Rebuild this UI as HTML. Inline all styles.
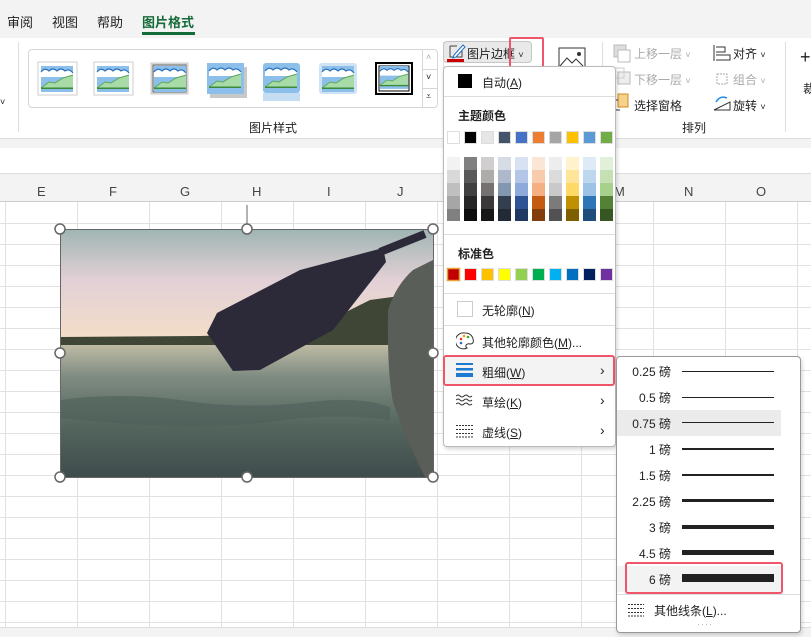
<!DOCTYPE html><html><head><meta charset="utf-8"><style>
*{box-sizing:border-box;margin:0;padding:0}
body{width:811px;height:637px;overflow:hidden;position:relative;background:#fff;font-family:"Liberation Sans","Noto Sans CJK SC",sans-serif;font-size:12px;color:#222}
.a{position:absolute}
.t{position:absolute;white-space:nowrap}
.vl{position:absolute;top:202px;width:1px;height:435px;background:#e1e1e1}
.hl{position:absolute;left:0;width:811px;height:1px;background:#e1e1e1}
.mi{position:absolute;left:482px;font-size:12px}
.sr{position:absolute;left:617px;width:164px;height:26px}
.sr span{position:absolute;right:110px;top:5px;font-size:12px}
.sr i{position:absolute;left:65px;width:92px;background:#222}
</style></head><body>
<div class="a" style="left:0;top:0;width:811px;height:38px;background:#f3f3f3"></div>
<div class="t" style="left:7px;top:12px;font-size:13px">审阅</div>
<div class="t" style="left:52px;top:12px;font-size:13px">视图</div>
<div class="t" style="left:97px;top:12px;font-size:13px">帮助</div>
<div class="t" style="left:142px;top:12px;font-size:13px;color:#166b3a;font-weight:bold">图片格式</div>
<div class="a" style="left:142px;top:32px;width:53px;height:3px;background:#166b3a"></div>
<div class="a" style="left:0;top:38px;width:811px;height:101px;background:#fff;border-bottom:1px solid #ddd;box-shadow:0 2px 3px rgba(0,0,0,.12)"></div>
<div class="a" style="left:18px;top:42px;width:1px;height:90px;background:#ddd"></div>
<div class="t" style="left:0;top:97px;font-size:9px">˅</div>
<div class="a" style="left:28px;top:49px;width:410px;height:59px;border:1px solid #d6d6d6;border-radius:4px"></div>
<div class="a" style="left:422px;top:49px;width:16px;height:59px;border-left:1px solid #d6d6d6"></div>
<div class="a" style="left:422px;top:69px;width:16px;height:20px;border-top:1px solid #d6d6d6;border-bottom:1px solid #d6d6d6"></div>
<div class="t" style="left:426px;top:52px;font-size:9px;color:#aaa">˄</div>
<div class="t" style="left:426px;top:72px;font-size:9px">˅</div>
<div class="t" style="left:426px;top:91px;font-size:9px">⩡</div>
<svg class="a" style="left:0;top:0" width="440" height="120">
<defs><g id="pic"><rect x="0" y="0" width="32" height="26" fill="#8cc0ea"/><path d="M0 6 q4-5 8-1 q4-4 8 0 q4-4 8 0 q4-3 8 2 V11 H0Z" fill="#fff"/><path d="M0 6 q4-5 8-1 q4-4 8 0 q4-4 8 0 q4-3 8 2" stroke="#2a72c0" fill="none" stroke-width="1.2"/><path d="M0 22 L8 16 L14 17 L22 12 L32 9 V22Z" fill="#a8dba8"/><path d="M0 22 L8 16 L14 17 L22 12 L32 9" stroke="#5aa85a" fill="none"/><rect x="0" y="21.5" width="32" height="1.5" fill="#3a8a3a"/></g></defs>
<rect x="38" y="62" width="39" height="33" fill="#fff" stroke="#ccc"/><use href="#pic" x="41" y="66"/>
<rect x="94" y="62" width="39" height="33" fill="#fff" stroke="#ccc"/><use href="#pic" x="97" y="66"/>
<rect x="151" y="63" width="37" height="31" fill="#ddd" stroke="#ccc"/><rect x="153" y="65" width="33" height="27" fill="none" stroke="#666"/><use href="#pic" x="154" y="66"/>
<rect x="210" y="67" width="37" height="31" fill="#c8c8c8"/><rect x="207" y="63" width="37" height="31" fill="#8cc0ea"/><use href="#pic" x="209" y="65"/>
<rect x="263" y="93" width="37" height="8" fill="#c5ddf3"/><rect x="263" y="63" width="37" height="30" rx="3" fill="#8cc0ea"/><use href="#pic" x="265" y="65"/>
<rect x="319" y="63" width="38" height="31" rx="3" fill="#cfe3f5"/><use href="#pic" x="322" y="66"/>
<rect x="376" y="63" width="36" height="31" fill="#fff" stroke="#000" stroke-width="2"/><rect x="379" y="66" width="30" height="25" fill="none" stroke="#000"/><use href="#pic" x="380" y="66" transform="translate(380 66) scale(.88) translate(-380 -66)"/>
</svg>
<div class="t" style="left:249px;top:119px;font-size:12px">图片样式</div>
<div class="a" style="left:443px;top:42px;width:1px;height:90px;background:#ddd"></div>
<div class="a" style="left:443px;top:41px;width:89px;height:22px;background:#e9e9e9;border:1px solid #c6c6c6;border-radius:4px"></div>
<svg class="a" style="left:446px;top:42px" width="20" height="20"><path d="M4 4 h7 M4 4 v11 h12 v-6" stroke="#444" fill="none"/><path d="M8 13 l9-10 2 2 -9 10 -3 1z" fill="#fff" stroke="#1b6fc4"/><rect x="1" y="17" width="17" height="3" fill="#c00"/></svg>
<div class="t" style="left:467px;top:45px">图片边框 <span style="font-size:9px">˅</span></div>
<div class="a" style="left:509px;top:37px;width:35px;height:31px;border:2px solid #f0566a;border-radius:2px"></div>
<svg class="a" style="left:558px;top:47px" width="30" height="22"><path d="M1 1 h26 v19 h-26z" fill="none" stroke="#333"/><path d="M2 19 l7-8 5 5 4-4 7 7" fill="none" stroke="#333"/><circle cx="21" cy="7" r="2" fill="#333"/><rect x="11" y="19" width="14" height="2" fill="#1e88e5"/></svg>
<div class="a" style="left:602px;top:42px;width:1px;height:70px;background:#ddd"></div>
<svg class="a" style="left:612px;top:44px" width="20" height="80"><rect x="2" y="1" width="12" height="12" fill="#ddd" stroke="#bbb"/><rect x="6" y="6" width="12" height="12" fill="#fff" stroke="#bbb"/><rect x="6" y="28" width="12" height="12" fill="#eee" stroke="#bbb"/><rect x="2" y="24" width="10" height="10" fill="none" stroke="#ccc"/><rect x="6" y="50" width="10" height="13" fill="#f6d28a" stroke="#d08a20"/><path d="M2 56 h4 M2 56 v10 h6" stroke="#333" fill="none"/></svg>
<div class="t" style="left:634px;top:45px;color:#aaa">上移一层 <span style="font-size:9px">˅</span></div>
<div class="t" style="left:634px;top:71px;color:#aaa">下移一层 <span style="font-size:9px">˅</span></div>
<div class="t" style="left:634px;top:97px">选择窗格</div>
<svg class="a" style="left:712px;top:44px" width="22" height="80"><path d="M2 1 v16 M4 3 h9 v5 h-9 M4 11 h14 v5 h-14" stroke="#333" fill="none"/><path d="M5 30 h10 v10 h-10z" stroke="#aaa" fill="none" stroke-dasharray="2 1"/><path d="M2 66 l16-8 v8z" stroke="#333" fill="none"/><path d="M4 58 q4-7 11-4" stroke="#1e88e5" fill="none" stroke-width="1.5"/></svg>
<div class="t" style="left:733px;top:45px">对齐 <span style="font-size:9px">˅</span></div>
<div class="t" style="left:733px;top:71px;color:#aaa">组合 <span style="font-size:9px">˅</span></div>
<div class="t" style="left:733px;top:97px">旋转 <span style="font-size:9px">˅</span></div>
<div class="t" style="left:682px;top:119px">排列</div>
<div class="a" style="left:785px;top:42px;width:1px;height:90px;background:#ddd"></div>
<div class="t" style="left:800px;top:47px;font-size:18px;font-weight:100">+</div>
<div class="t" style="left:803px;top:80px">裁</div>
<div class="a" style="left:0;top:139px;width:811px;height:9px;background:#f3f3f3"></div>
<div class="a" style="left:0;top:173px;width:811px;height:29px;background:#f3f3f3;border-top:1px solid #ddd;border-bottom:1px solid #ccc"></div>
<div class="t" style="left:37px;top:184px;color:#444;font-size:13px">E</div>
<div class="t" style="left:109px;top:184px;color:#444;font-size:13px">F</div>
<div class="t" style="left:180px;top:184px;color:#444;font-size:13px">G</div>
<div class="t" style="left:252px;top:184px;color:#444;font-size:13px">H</div>
<div class="t" style="left:327px;top:184px;color:#444;font-size:13px">I</div>
<div class="t" style="left:397px;top:184px;color:#444;font-size:13px">J</div>
<div class="t" style="left:614px;top:184px;color:#444;font-size:13px">M</div>
<div class="t" style="left:684px;top:184px;color:#444;font-size:13px">N</div>
<div class="t" style="left:756px;top:184px;color:#444;font-size:13px">O</div>
<div class="vl" style="left:5px"></div><div class="vl" style="left:77px"></div><div class="vl" style="left:149px"></div><div class="vl" style="left:221px"></div><div class="vl" style="left:293px"></div><div class="vl" style="left:365px"></div><div class="vl" style="left:437px"></div><div class="vl" style="left:509px"></div><div class="vl" style="left:581px"></div><div class="vl" style="left:653px"></div><div class="vl" style="left:725px"></div><div class="vl" style="left:797px"></div>
<div class="hl" style="top:223px"></div><div class="hl" style="top:244px"></div><div class="hl" style="top:265px"></div><div class="hl" style="top:286px"></div><div class="hl" style="top:307px"></div><div class="hl" style="top:328px"></div><div class="hl" style="top:349px"></div><div class="hl" style="top:370px"></div><div class="hl" style="top:391px"></div><div class="hl" style="top:412px"></div><div class="hl" style="top:433px"></div><div class="hl" style="top:454px"></div><div class="hl" style="top:475px"></div><div class="hl" style="top:496px"></div><div class="hl" style="top:517px"></div><div class="hl" style="top:538px"></div><div class="hl" style="top:559px"></div><div class="hl" style="top:580px"></div><div class="hl" style="top:601px"></div><div class="hl" style="top:622px"></div>
<div class="a" style="left:0;top:627px;width:811px;height:10px;background:#f3f3f3;border-top:1px solid #ddd"></div>
<svg class="a" style="left:0;top:0" width="450" height="490">
<defs><linearGradient id="sky" x1="0" y1="0" x2="0" y2="1"><stop offset="0" stop-color="#9fb5b2"/><stop offset=".45" stop-color="#e2d0d6"/><stop offset="1" stop-color="#f5dfc6"/></linearGradient>
<linearGradient id="wat" x1="0" y1="0" x2="0" y2="1"><stop offset="0" stop-color="#c2bea6"/><stop offset=".25" stop-color="#7f8c82"/><stop offset=".6" stop-color="#55675f"/><stop offset="1" stop-color="#3f4c4c"/></linearGradient></defs>
<rect x="60" y="229" width="373" height="114" fill="url(#sky)"/>
<rect x="60" y="343" width="373" height="134" fill="url(#wat)"/>
<path d="M60 337 L200 336 L300 333 L340 315 L370 300 L400 296 L400 345 L60 345Z" fill="#3f4636"/>
<path d="M60 400 q60-8 120 0 q60 10 130 2 q50-6 80 5 V420 q-60-8-120 2 q-80 10-210-4z" fill="#4c5f58" opacity=".6"/>
<path d="M388 310 q8-25 25-40 l20-10 V477 H425 q-20-40-32-75 q-6-30-5-92z" fill="#595e58"/>
<path d="M207 333 L217 313 L300 270 L383 248 L386 262 L333 330 L260 370 L233 371Z" fill="#2c2939"/>
<path d="M380 252 L425 234" stroke="#2c2939" stroke-width="8"/>
<rect x="60.5" y="229.5" width="373" height="248" fill="none" stroke="#666"/>
<line x1="247" y1="205" x2="247" y2="229" stroke="#666"/>
<g fill="#fff" stroke="#666" stroke-width="1.5"><circle cx="60" cy="229" r="5"/><circle cx="247" cy="229" r="5"/><circle cx="433" cy="229" r="5"/><circle cx="60" cy="353" r="5"/><circle cx="433" cy="353" r="5"/><circle cx="60" cy="477" r="5"/><circle cx="247" cy="477" r="5"/><circle cx="433" cy="477" r="5"/></g>
</svg>
<div class="a" style="left:443px;top:66px;width:173px;height:381px;background:#fff;border:1px solid #bbb;border-radius:4px;box-shadow:1px 2px 4px rgba(0,0,0,.18)"></div>
<div class="a" style="left:458px;top:74px;width:14px;height:14px;background:#000"></div>
<div class="mi" style="top:74px">自动(<u>A</u>)</div>
<div class="a" style="left:444px;top:96px;width:171px;height:1px;background:#ddd"></div>
<div class="t" style="left:458px;top:107px;font-weight:bold">主题颜色</div>
<svg class="a" style="left:446px;top:130px" width="170" height="95">
<g stroke="#ddd" stroke-width="1">
<rect x="1.5" y="1.5" width="12" height="12" fill="#fff"/><rect x="18.5" y="1.5" width="12" height="12" fill="#000"/><rect x="35.5" y="1.5" width="12" height="12" fill="#e7e6e6"/><rect x="52.5" y="1.5" width="12" height="12" fill="#44546a"/><rect x="69.5" y="1.5" width="12" height="12" fill="#4472c4"/><rect x="86.5" y="1.5" width="12" height="12" fill="#ed7d31"/><rect x="103.5" y="1.5" width="12" height="12" fill="#a5a5a5"/><rect x="120.5" y="1.5" width="12" height="12" fill="#ffc000"/><rect x="137.5" y="1.5" width="12" height="12" fill="#5b9bd5"/><rect x="154.5" y="1.5" width="12" height="12" fill="#70ad47"/>
</g>
<g>
<rect x="1" y="27" width="13" height="13" fill="#f2f2f2"/><rect x="1" y="40" width="13" height="13" fill="#d9d9d9"/><rect x="1" y="53" width="13" height="13" fill="#bfbfbf"/><rect x="1" y="66" width="13" height="13" fill="#a6a6a6"/><rect x="1" y="79" width="13" height="12" fill="#808080"/>
<rect x="18" y="27" width="13" height="13" fill="#808080"/><rect x="18" y="40" width="13" height="13" fill="#595959"/><rect x="18" y="53" width="13" height="13" fill="#404040"/><rect x="18" y="66" width="13" height="13" fill="#262626"/><rect x="18" y="79" width="13" height="12" fill="#0d0d0d"/>
<rect x="35" y="27" width="13" height="13" fill="#d0cece"/><rect x="35" y="40" width="13" height="13" fill="#aeabab"/><rect x="35" y="53" width="13" height="13" fill="#757171"/><rect x="35" y="66" width="13" height="13" fill="#3a3838"/><rect x="35" y="79" width="13" height="12" fill="#171616"/>
<rect x="52" y="27" width="13" height="13" fill="#d6dce4"/><rect x="52" y="40" width="13" height="13" fill="#adb9ca"/><rect x="52" y="53" width="13" height="13" fill="#8497b0"/><rect x="52" y="66" width="13" height="13" fill="#333f4f"/><rect x="52" y="79" width="13" height="12" fill="#222a35"/>
<rect x="69" y="27" width="13" height="13" fill="#d9e2f3"/><rect x="69" y="40" width="13" height="13" fill="#b4c6e7"/><rect x="69" y="53" width="13" height="13" fill="#8eaadb"/><rect x="69" y="66" width="13" height="13" fill="#2f5496"/><rect x="69" y="79" width="13" height="12" fill="#1f3864"/>
<rect x="86" y="27" width="13" height="13" fill="#fbe5d5"/><rect x="86" y="40" width="13" height="13" fill="#f7cbac"/><rect x="86" y="53" width="13" height="13" fill="#f4b083"/><rect x="86" y="66" width="13" height="13" fill="#c55a11"/><rect x="86" y="79" width="13" height="12" fill="#833c0b"/>
<rect x="103" y="27" width="13" height="13" fill="#ededed"/><rect x="103" y="40" width="13" height="13" fill="#dbdbdb"/><rect x="103" y="53" width="13" height="13" fill="#c9c9c9"/><rect x="103" y="66" width="13" height="13" fill="#7b7b7b"/><rect x="103" y="79" width="13" height="12" fill="#525252"/>
<rect x="120" y="27" width="13" height="13" fill="#fff2cc"/><rect x="120" y="40" width="13" height="13" fill="#fee599"/><rect x="120" y="53" width="13" height="13" fill="#ffd965"/><rect x="120" y="66" width="13" height="13" fill="#bf9000"/><rect x="120" y="79" width="13" height="12" fill="#7f6000"/>
<rect x="137" y="27" width="13" height="13" fill="#deeaf6"/><rect x="137" y="40" width="13" height="13" fill="#bdd7ee"/><rect x="137" y="53" width="13" height="13" fill="#9cc3e5"/><rect x="137" y="66" width="13" height="13" fill="#2e75b5"/><rect x="137" y="79" width="13" height="12" fill="#1e4e79"/>
<rect x="154" y="27" width="13" height="13" fill="#e2efd9"/><rect x="154" y="40" width="13" height="13" fill="#c5e0b3"/><rect x="154" y="53" width="13" height="13" fill="#a8d08d"/><rect x="154" y="66" width="13" height="13" fill="#538135"/><rect x="154" y="79" width="13" height="12" fill="#375623"/>
</g></svg>
<div class="a" style="left:444px;top:234px;width:171px;height:1px;background:#ddd"></div>
<div class="t" style="left:458px;top:245px;font-weight:bold">标准色</div>
<svg class="a" style="left:446px;top:267px" width="170" height="16"><g stroke="#ddd"><rect x="1.5" y="1.5" width="12" height="12" fill="#c00000" stroke="#e8a23c" stroke-width="1.5"/><rect x="18.5" y="1.5" width="12" height="12" fill="#f00"/><rect x="35.5" y="1.5" width="12" height="12" fill="#ffc000"/><rect x="52.5" y="1.5" width="12" height="12" fill="#ff0"/><rect x="69.5" y="1.5" width="12" height="12" fill="#92d050"/><rect x="86.5" y="1.5" width="12" height="12" fill="#00b050"/><rect x="103.5" y="1.5" width="12" height="12" fill="#00b0f0"/><rect x="120.5" y="1.5" width="12" height="12" fill="#0070c0"/><rect x="137.5" y="1.5" width="12" height="12" fill="#002060"/><rect x="154.5" y="1.5" width="12" height="12" fill="#7030a0"/></g></svg>
<div class="a" style="left:444px;top:293px;width:171px;height:1px;background:#ddd"></div>
<div class="a" style="left:457px;top:301px;width:16px;height:16px;border:1px solid #ccc"></div>
<div class="mi" style="top:302px">无轮廓(<u>N</u>)</div>
<div class="a" style="left:444px;top:325px;width:171px;height:1px;background:#ddd"></div>
<svg class="a" style="left:456px;top:332px" width="18" height="18"><path d="M9 1 a8 8 0 1 0 2 15 c-3-2 0-5 3-4 c3 0 4-2 3-5 C16 3 13 1 9 1z" fill="none" stroke="#333"/><circle cx="5" cy="7" r="1.3" fill="#e33"/><circle cx="8" cy="4" r="1.3" fill="#f90"/><circle cx="12" cy="5" r="1.3" fill="#3a3"/><circle cx="5" cy="11" r="1.3" fill="#36c"/></svg>
<div class="mi" style="top:334px">其他轮廓颜色(<u>M</u>)...</div>
<div class="a" style="left:443px;top:355px;width:172px;height:31px;background:#f3f3f3;border:2px solid #f0566a;border-radius:3px"></div>
<svg class="a" style="left:456px;top:362px" width="18" height="17"><rect x="0" y="1" width="17" height="2" fill="#1e7ad0"/><rect x="0" y="6" width="17" height="2.5" fill="#1e7ad0"/><rect x="0" y="11" width="17" height="4" fill="#1e7ad0"/></svg>
<div class="mi" style="top:364px">粗细(<u>W</u>)</div>
<div class="t" style="left:600px;top:362px;font-size:14px">›</div>
<svg class="a" style="left:456px;top:394px" width="18" height="14"><path d="M0 2 q2-2 4 0 t4 0 t4 0 t4 0 M0 6 q2-2 4 0 t4 0 t4 0 t4 0 M0 10 q2-2 4 0 t4 0 t4 0 t4 0" stroke="#333" fill="none"/></svg>
<div class="mi" style="top:394px">草绘(<u>K</u>)</div>
<div class="t" style="left:600px;top:392px;font-size:14px">›</div>
<svg class="a" style="left:456px;top:424px" width="18" height="14"><path d="M0 1.5 h17 M0 5.5 h17 M0 9.5 h17 M0 13 h17" stroke="#333" stroke-dasharray="2 1" fill="none"/></svg>
<div class="mi" style="top:424px">虚线(<u>S</u>)</div>
<div class="t" style="left:600px;top:422px;font-size:14px">›</div>
<div class="a" style="left:616px;top:356px;width:185px;height:277px;background:#fff;border:1px solid #999;border-radius:4px;box-shadow:1px 2px 4px rgba(0,0,0,.18)"></div>
<div class="sr" style="top:358px"><span>0.25 磅</span><i style="top:13px;height:1px"></i></div>
<div class="sr" style="top:384px"><span>0.5 磅</span><i style="top:13px;height:1px"></i></div>
<div class="sr" style="top:410px;background:#ebebeb"><span>0.75 磅</span><i style="top:12px;height:1px"></i></div>
<div class="sr" style="top:436px"><span>1 磅</span><i style="top:12px;height:2px"></i></div>
<div class="sr" style="top:462px"><span>1.5 磅</span><i style="top:12px;height:2px"></i></div>
<div class="sr" style="top:488px"><span>2.25 磅</span><i style="top:11px;height:3px"></i></div>
<div class="sr" style="top:514px"><span>3 磅</span><i style="top:11px;height:4px"></i></div>
<div class="sr" style="top:540px"><span>4.5 磅</span><i style="top:10px;height:5px"></i></div>
<div class="sr" style="top:566px;background:#f3f3f3"><span>6 磅</span><i style="top:8px;height:8px"></i></div>
<div class="a" style="left:625px;top:562px;width:158px;height:32px;border:2px solid #f0566a;border-radius:3px"></div>
<div class="a" style="left:617px;top:594px;width:183px;height:1px;background:#ddd"></div>
<svg class="a" style="left:628px;top:603px" width="18" height="14"><path d="M0 1.5 h16 M0 5.5 h16 M0 9.5 h16 M0 13 h16" stroke="#333" stroke-dasharray="2 1" fill="none"/></svg>
<div class="t" style="left:654px;top:602px">其他线条(<u>L</u>)...</div>
<div class="t" style="left:697px;top:619px;color:#aac;font-size:9px;letter-spacing:1px">····</div>
</body></html>
